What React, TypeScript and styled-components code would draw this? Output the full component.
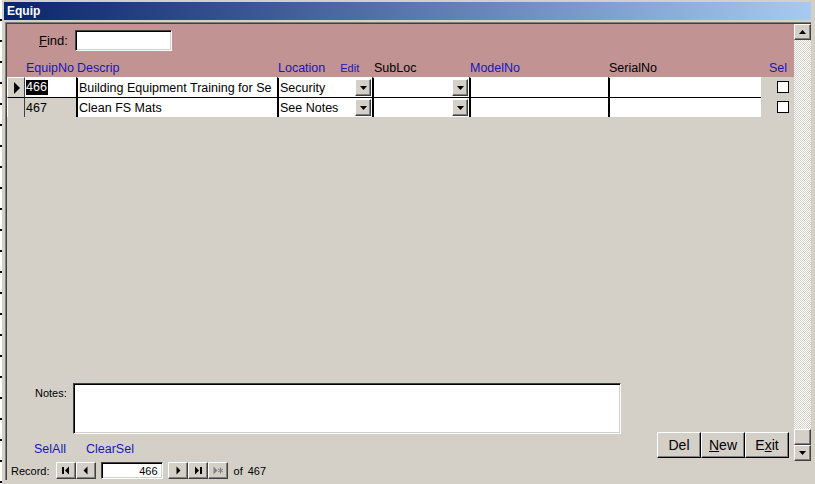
import React from 'react';
import styled, { createGlobalStyle, css } from 'styled-components';

// --- Access "Equip" continuous form ---

const FONT = `"Liberation Sans", Arial, sans-serif`;
const FACE = '#d4d0c8';
const HEADER = '#c29393';
const LABEL_BLUE = '#1717bb';

const COLS = '18px 51px 201px 95px 97px 139px 153px 31px';

const GlobalStyle = createGlobalStyle`
  html, body { margin: 0; padding: 0; overflow: hidden; background: ${FACE}; }
  #root { width: 815px; height: 484px; }
  * { box-sizing: border-box; }
`;

const raised = css`
  background: ${FACE};
  border: 1px solid;
  border-color: #fff #404040 #404040 #fff;
  box-shadow: inset -1px -1px #808080;
`;

const sunken = css`
  background: #fff;
  border: 1px solid;
  border-color: #404040 #fff #fff #404040;
  box-shadow: inset 1px 1px #000, inset -1px -1px ${FACE};
`;

const Screen = styled.div`
  width: 815px;
  height: 484px;
  display: flex;
  background: ${FACE};
  font-family: ${FONT};
  overflow: hidden;
`;

const LeftEdge = styled.div`
  width: 4px;
  flex-shrink: 0;
  background:
    repeating-linear-gradient(to bottom, transparent 0 19px, #000 19px 21px) 0 0 / 2px 100% no-repeat,
    linear-gradient(to right, #fff 0 2px, ${FACE} 2px 4px);
`;

const Window = styled.div`
  flex: 1;
  display: flex;
  flex-direction: column;
  padding: 2px 4px 4px 0;
`;

const TitleBar = styled.div`
  height: 18px;
  flex-shrink: 0;
  background: linear-gradient(to right, #0a246a, #a6caf0);
  color: #fff;
  font: bold 12px ${FONT};
  display: flex;
  align-items: center;
  padding-left: 3px;
`;

const Client = styled.div`
  flex: 1;
  margin: 2px 0 0 1px;
  display: flex;
  flex-direction: column;
  border-top: 1px solid #808080;
  border-left: 1px solid #808080;
  box-shadow: inset 1px 1px #404040;
  padding: 1px 0 0 1px;
`;

const Main = styled.div`
  flex: 1;
  display: flex;
  min-height: 0;
`;

const Form = styled.div`
  flex: 1;
  display: flex;
  flex-direction: column;
`;

// --- header ---

const Header = styled.div`
  height: 53px;
  flex-shrink: 0;
  background: ${HEADER};
  display: flex;
  flex-direction: column;
`;

const FindRow = styled.div`
  display: flex;
  align-items: center;
  height: 21px;
  margin-top: 6px;
  padding-left: 32px;
`;

const FindLabel = styled.label`
  width: 36px;
  font-size: 13px;
  color: #000;
  u { text-decoration: underline; }
`;

const FindBox = styled.div`
  ${sunken};
  width: 97px;
  height: 21px;
`;

const LabelRow = styled.div`
  display: grid;
  grid-template-columns: ${COLS};
  height: 26px;
  align-items: end;
  padding-bottom: 1px;
`;

const ColLabel = styled.span<{ $black?: boolean; $small?: boolean; $offset?: number }>`
  font-size: ${({ $small }) => ($small ? '11px' : '12.5px')};
  line-height: 15px;
  color: ${({ $black }) => ($black ? '#000' : LABEL_BLUE)};
  padding-left: ${({ $offset }) => $offset ?? 1}px;
  white-space: nowrap;
`;

const LabelPair = styled.div`
  display: flex;
  align-items: flex-end;
  gap: 14px;
`;

// --- detail ---

const Detail = styled.div`
  flex: 1;
`;

const Row = styled.div`
  display: grid;
  grid-template-columns: ${COLS};
  height: 20px;
`;

const Selector = styled.div<{ $top?: boolean }>`
  background: ${FACE};
  border-top: 1px solid ${({ $top }) => ($top ? '#000' : '#fff')};
  border-left: 1px solid #fff;
  border-right: 1px solid #404040;
  display: flex;
  align-items: center;
  padding-left: 6px;
`;

const Cell = styled.div<{ $top?: boolean; $white?: boolean; $edge?: boolean }>`
  background: ${({ $white }) => ($white ? '#fff' : 'transparent')};
  border-top: 1px solid ${({ $top }) => ($top ? '#000' : 'transparent')};
  border-left: ${({ $edge }) => ($edge ? '2px solid #000' : 'none')};
  display: flex;
  align-items: center;
  font-size: 12.5px;
  color: #000;
  white-space: nowrap;
  overflow: hidden;
  padding-left: 1px;
`;

const CellText = styled.span`
  flex: 1;
  overflow: hidden;
`;

const Picked = styled.span`
  background: #000;
  color: #fff;
  line-height: 15px;
  padding-right: 1px;
`;

const DropButton = styled.div`
  ${raised};
  width: 16px;
  height: 17px;
  margin-right: 1px;
  display: flex;
  align-items: center;
  justify-content: center;
  flex-shrink: 0;
`;

const SelCell = styled.div`
  display: flex;
  align-items: center;
  padding-left: 16px;
`;

const CheckBox = styled.div`
  width: 12px;
  height: 12px;
  background: #fff;
  border: 1px solid #000;
`;

// --- footer ---

const Footer = styled.div`
  height: 84px;
  flex-shrink: 0;
  display: grid;
  grid-template-columns: 1fr auto;
`;

const FooterLeft = styled.div`
  display: flex;
  flex-direction: column;
`;

const NotesRow = styled.div`
  display: flex;
  margin-top: 6px;
  padding-left: 28px;
`;

const NotesLabel = styled.span`
  width: 38px;
  font-size: 11px;
  padding-top: 4px;
  color: #000;
`;

const NotesBox = styled.div`
  ${sunken};
  width: 548px;
  height: 51px;
`;

const LinksRow = styled.div`
  flex: 1;
  display: flex;
  align-items: center;
  gap: 20px;
  padding: 2px 0 0 27px;
`;

const Link = styled.span`
  font-size: 12.5px;
  color: ${LABEL_BLUE};
`;

const ButtonGroup = styled.div`
  display: flex;
  align-self: end;
  margin: 0 5px 3px 0;
`;

const CmdButton = styled.div`
  ${raised};
  border-color: #fff #000 #000 #fff;
  width: 44px;
  height: 26px;
  display: flex;
  align-items: center;
  justify-content: center;
  font-size: 14px;
  color: #000;
  u { text-decoration: underline; }
`;

// --- scrollbar ---

const ScrollBar = styled.div`
  width: 17px;
  flex-shrink: 0;
  display: flex;
  flex-direction: column;
  background: repeating-conic-gradient(#fff 0 25%, ${FACE} 0 50%) 0 0 / 2px 2px;
`;

const ScrollButton = styled.div`
  ${raised};
  height: 16px;
  flex-shrink: 0;
  display: flex;
  align-items: center;
  justify-content: center;
`;

const Track = styled.div`
  flex: 1;
`;

// --- navigation bar ---

const NavBar = styled.div`
  height: 19px;
  flex-shrink: 0;
  display: flex;
  align-items: center;
  padding-left: 4px;
  font-size: 11px;
  color: #000;
`;

const NavLabel = styled.span<{ $gap?: number }>`
  margin-left: ${({ $gap }) => $gap ?? 0}px;
`;

const NavButtons = styled.div<{ $gap: number }>`
  display: flex;
  margin-left: ${({ $gap }) => $gap}px;
`;

const NavButton = styled.div`
  ${raised};
  width: 20px;
  height: 17px;
  display: flex;
  align-items: center;
  justify-content: center;
`;

const RecordBox = styled.div`
  ${sunken};
  width: 62px;
  height: 17px;
  margin-left: 5px;
  display: flex;
  align-items: center;
  justify-content: flex-end;
  padding-right: 4px;
`;

// --- icons ---

const DownTri = () => (
  <svg width="7" height="4" viewBox="0 0 7 4"><polygon points="0,0 7,0 3.5,4" fill="#000" /></svg>
);
const UpTri = () => (
  <svg width="7" height="4" viewBox="0 0 7 4"><polygon points="0,4 7,4 3.5,0" fill="#000" /></svg>
);
const RowArrow = () => (
  <svg width="6" height="12" viewBox="0 0 6 12"><polygon points="0,0 6,6 0,12" fill="#000" /></svg>
);

const NavIcon = ({ kind }: { kind: 'first' | 'prev' | 'next' | 'last' | 'new' }) => {
  const c = kind === 'new' ? '#808080' : '#000';
  return (
    <svg width="10" height="9" viewBox="0 0 10 9">
      {kind === 'first' && (<><rect x="1" y="1" width="2" height="7" fill={c} /><polygon points="8,0.5 8,8.5 4,4.5" fill={c} /></>)}
      {kind === 'prev' && <polygon points="6.5,0.5 6.5,8.5 2.5,4.5" fill={c} />}
      {kind === 'next' && <polygon points="3.5,0.5 3.5,8.5 7.5,4.5" fill={c} />}
      {kind === 'last' && (<><polygon points="2,0.5 2,8.5 6,4.5" fill={c} /><rect x="7" y="1" width="2" height="7" fill={c} /></>)}
      {kind === 'new' && (
        <>
          <polygon points="0.5,0.5 0.5,8.5 4.5,4.5" fill={c} />
          <path d="M7.5 1.5v6M5 3l5 3M10 3l-5 3" stroke={c} strokeWidth="1" />
        </>
      )}
    </svg>
  );
};

// the Descrip box only has room for the start of the first title
const ROWS = [
  { no: '466', descrip: 'Building Equipment Training for Se', location: 'Security' },
  { no: '467', descrip: 'Clean FS Mats', location: 'See Notes' },
];

const App = () => (
  <>
    <GlobalStyle />
    <Screen>
      <LeftEdge />
      <Window>
        <TitleBar>Equip</TitleBar>
        <Client>
          <Main>
            <Form>
              <Header>
                <FindRow>
                  <FindLabel><u>F</u>ind:</FindLabel>
                  <FindBox />
                </FindRow>
                <LabelRow>
                  <span />
                  <ColLabel>EquipNo</ColLabel>
                  <ColLabel>Descrip</ColLabel>
                  <LabelPair>
                    <ColLabel>Location</ColLabel>
                    <ColLabel $small>Edit</ColLabel>
                  </LabelPair>
                  <ColLabel $black $offset={2}>SubLoc</ColLabel>
                  <ColLabel>ModelNo</ColLabel>
                  <ColLabel $black>SerialNo</ColLabel>
                  <ColLabel $offset={8}>Sel</ColLabel>
                </LabelRow>
              </Header>

              <Detail>
                {ROWS.map((r, i) => {
                  const top = i > 0;
                  const current = i === 0;
                  return (
                    <Row key={r.no}>
                      <Selector $top={top}>{current && <RowArrow />}</Selector>
                      <Cell $top={top} $white={current}>
                        {current ? <Picked>{r.no}</Picked> : r.no}
                      </Cell>
                      <Cell $top={top} $white $edge><CellText>{r.descrip}</CellText></Cell>
                      <Cell $top={top} $white $edge>
                        <CellText>{r.location}</CellText>
                        <DropButton><DownTri /></DropButton>
                      </Cell>
                      <Cell $top={top} $white $edge>
                        <CellText />
                        <DropButton><DownTri /></DropButton>
                      </Cell>
                      <Cell $top={top} $white $edge />
                      <Cell $top={top} $white $edge />
                      <SelCell><CheckBox /></SelCell>
                    </Row>
                  );
                })}
              </Detail>

              <Footer>
                <FooterLeft>
                  <NotesRow>
                    <NotesLabel>Notes:</NotesLabel>
                    <NotesBox />
                  </NotesRow>
                  <LinksRow>
                    <Link>SelAll</Link>
                    <Link>ClearSel</Link>
                  </LinksRow>
                </FooterLeft>
                <ButtonGroup>
                  <CmdButton>Del</CmdButton>
                  <CmdButton><u>N</u>ew</CmdButton>
                  <CmdButton>E<u>x</u>it</CmdButton>
                </ButtonGroup>
              </Footer>
            </Form>

            <ScrollBar>
              <ScrollButton><UpTri /></ScrollButton>
              <Track />
              <ScrollButton />
              <ScrollButton><DownTri /></ScrollButton>
            </ScrollBar>
          </Main>

          <NavBar>
            <NavLabel>Record:</NavLabel>
            <NavButtons $gap={6}>
              <NavButton><NavIcon kind="first" /></NavButton>
              <NavButton><NavIcon kind="prev" /></NavButton>
            </NavButtons>
            <RecordBox>466</RecordBox>
            <NavButtons $gap={5}>
              <NavButton><NavIcon kind="next" /></NavButton>
              <NavButton><NavIcon kind="last" /></NavButton>
              <NavButton><NavIcon kind="new" /></NavButton>
            </NavButtons>
            <NavLabel $gap={6}>of</NavLabel>
            <NavLabel $gap={5}>467</NavLabel>
          </NavBar>
        </Client>
      </Window>
    </Screen>
  </>
);

export default App;
